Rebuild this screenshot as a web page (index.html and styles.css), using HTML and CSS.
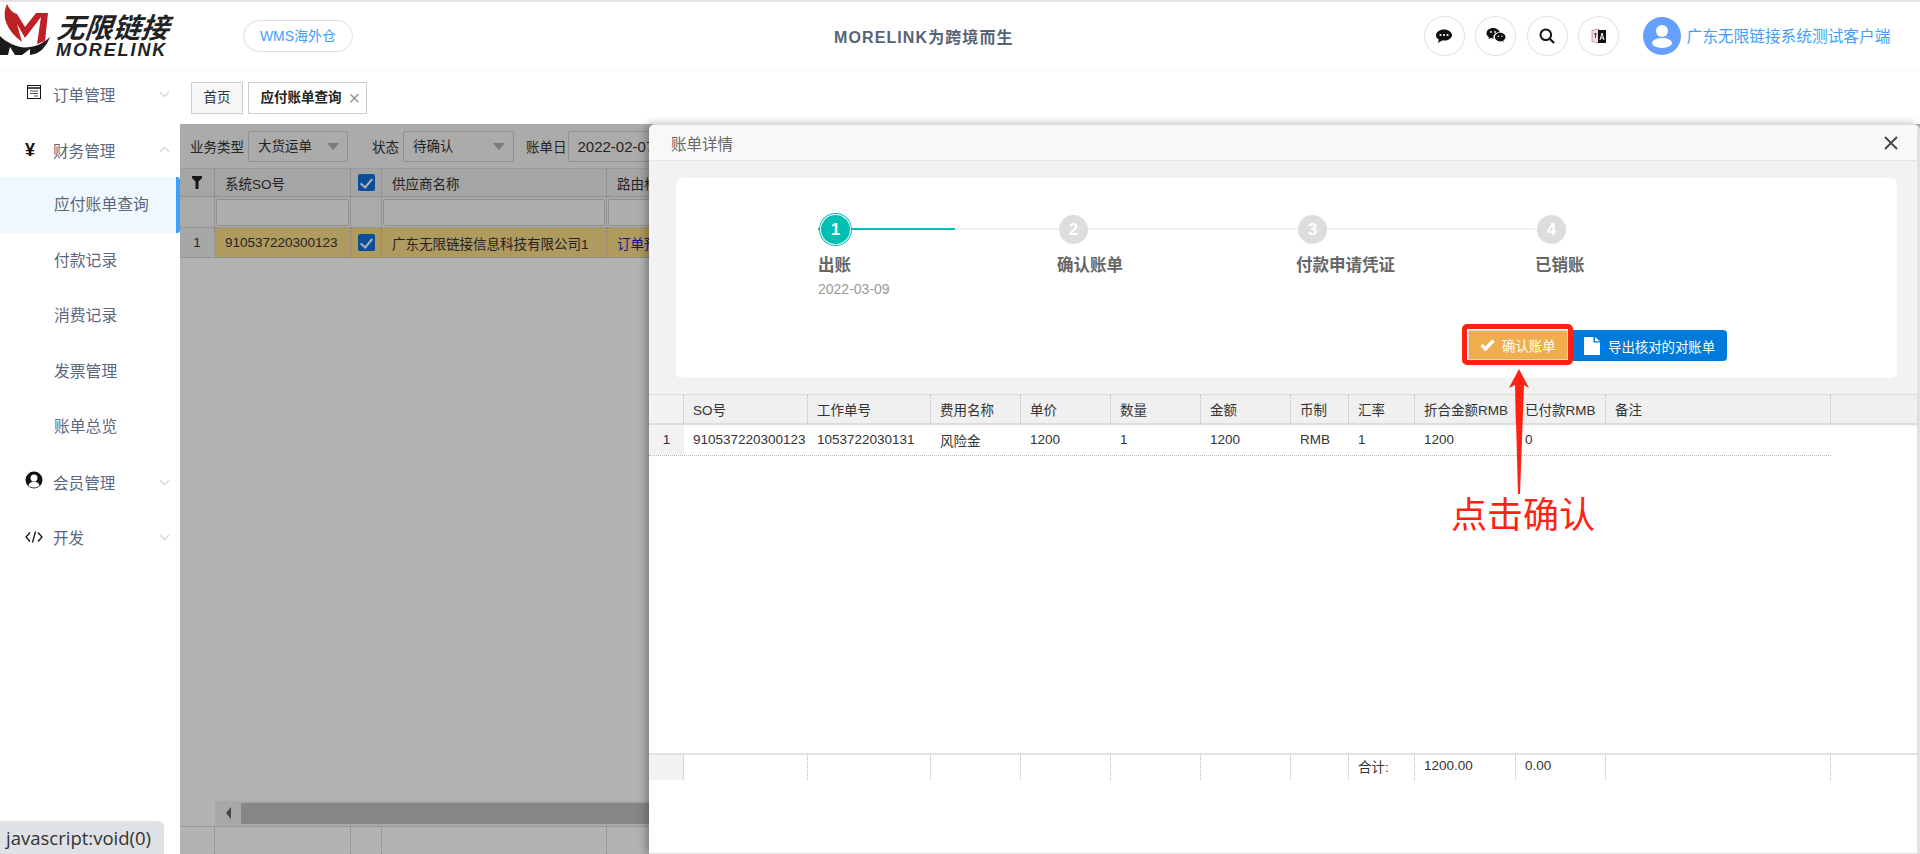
FILE: index.html
```html
<!DOCTYPE html>
<html lang="zh-CN">
<head>
    <meta charset="UTF-8">
    <title>应付账单查询</title>
    <link rel="stylesheet" href="styles.css">
</head>
<body>
    <header class="topbar">
        <div class="logo">
            <svg class="logo-mark" width="52" height="58" viewBox="0 0 52 58">
                <path d="M0 36C8 44 20 49 30 47C38 46 45 42 50 37C46 47 40 54 30 55L30 49L22 55L15 55L10 47L8 55L0 55Z" fill="#1a1a1a"/>
                <path d="M7 4C1 16 6 30 22 42L17 24L25 38L41 17L37 44L45 41L48 13L36 13L25 27L17 14C13 13 9 9 7 4Z" fill="#bd2026"/>
            </svg>
            <div class="logo-text">
                <span class="logo-cn">无限链接</span>
                <span class="logo-en">MORELINK</span>
            </div>
        </div>
        <a class="wms-btn">WMS海外仓</a>
        <div class="slogan">MORELINK为跨境而生</div>
        <div class="top-tools">
            <span class="tool-btn">
                <svg width="18" height="18" viewBox="0 0 18 18"><path d="M9 2.500C4.600 2.500 1 5 1 8.200c0 1.800 1.100 3.300 2.800 4.300L3 16l4-2.600c.6.1 1.300.2 2 .2 4.400 0 8-2.400 8-5.400S13.400 2.500 9 2.500z" fill="#111"/><circle cx="5.500" cy="8" r="1.100" fill="#fff"/><circle cx="9" cy="8" r="1.100" fill="#fff"/><circle cx="12.500" cy="8" r="1.100" fill="#fff"/></svg>
            </span>
            <span class="tool-btn">
                <svg width="20" height="18" viewBox="0 0 20 18"><path d="M7 1C3.400 1 .5 3.300.5 6.200c0 1.700 1 3.100 2.500 4.100L2.400 12.300l2.300-1.200c.7.200 1.400.3 2.300.3.200 0 .4 0 .6 0-.1-.4-.2-.8-.2-1.300C7.400 7.500 10 5.300 13.300 5.300h.4C13.100 2.800 10.300 1 7 1z" fill="#111"/><path d="M19.500 10.100c0-2.500-2.500-4.300-5.300-4.300-3 0-5.300 1.900-5.300 4.300s2.300 4.300 5.300 4.300c.6 0 1.200-.1 1.800-.3l1.700 1-.5-1.600c1.400-.8 2.300-2 2.300-3.400z" fill="#111"/><circle cx="5" cy="5" r=".9" fill="#fff"/><circle cx="9" cy="5" r=".9" fill="#fff"/><circle cx="12.400" cy="9.300" r=".7" fill="#fff"/><circle cx="16" cy="9.300" r=".7" fill="#fff"/></svg>
            </span>
            <span class="tool-btn">
                <svg width="18" height="18" viewBox="0 0 18 18"><circle cx="7.800" cy="7.800" r="5.300" fill="none" stroke="#111" stroke-width="2"/><path d="M11.800 11.800L16 16" stroke="#111" stroke-width="2.200"/></svg>
            </span>
            <span class="tool-btn">
                <svg width="16" height="18" viewBox="0 0 16 18"><path d="M1 3.500L8 2v14L1 14.500z" fill="#f3e3e3" stroke="#b58" stroke-width=".6"/><path d="M7 3h8v13H7z" fill="#111"/><path d="M9 13l2-7 2 7M10 11h2" stroke="#fff" stroke-width="1" fill="none"/><path d="M3 7h3M4.500 6v5" stroke="#444" stroke-width="1"/></svg>
            </span>
        </div>
        <div class="user">
            <span class="avatar">
                <svg width="38" height="38" viewBox="0 0 38 38"><circle cx="19" cy="14" r="6" fill="#fff"/><ellipse cx="19" cy="26" rx="10" ry="5" fill="#fff"/></svg>
            </span>
            <span class="user-name">广东无限链接系统测试客户端</span>
        </div>
    </header>

    <div class="layout">
        <aside class="sidebar">
            <div class="menu-item">
                <svg class="menu-icon" width="16" height="16" viewBox="0 0 16 16"><rect x="1.500" y="1.500" width="13" height="13" fill="none" stroke="#111" stroke-width="1"/><path d="M1.500 4h13" stroke="#111" stroke-width="1.500"/><path d="M4 7h8M4 9.500h8M8 12h4" stroke="#555" stroke-width="1"/></svg>
                <span class="menu-label">订单管理</span>
                <svg class="menu-arrow" width="11" height="7" viewBox="0 0 11 7"><path d="M1 1l4.500 4.500L10 1" fill="none" stroke="#d4d7dc" stroke-width="1.400"/></svg>
            </div>
            <div class="menu-item">
                <span class="menu-icon yen">¥</span>
                <span class="menu-label">财务管理</span>
                <svg class="menu-arrow" width="11" height="7" viewBox="0 0 11 7"><path d="M1 6l4.500-4.500L10 6" fill="none" stroke="#d4d7dc" stroke-width="1.400"/></svg>
            </div>
            <div class="sub-item active">应付账单查询</div>
            <div class="sub-item">付款记录</div>
            <div class="sub-item">消费记录</div>
            <div class="sub-item">发票管理</div>
            <div class="sub-item">账单总览</div>
            <div class="menu-item">
                <svg class="menu-icon" width="18" height="18" viewBox="0 0 18 18"><circle cx="9" cy="9" r="8.500" fill="#111"/><circle cx="9" cy="7" r="3.500" fill="#fff"/><path d="M3.500 14.500c1-3 3-4 5.500-4s4.500 1 5.500 4c-1.500 1.500-3.500 2-5.500 2s-4-.5-5.500-2z" fill="#fff"/></svg>
                <span class="menu-label">会员管理</span>
                <svg class="menu-arrow" width="11" height="7" viewBox="0 0 11 7"><path d="M1 1l4.500 4.500L10 1" fill="none" stroke="#d4d7dc" stroke-width="1.400"/></svg>
            </div>
            <div class="menu-item">
                <svg class="menu-icon icon-code" width="18" height="14" viewBox="0 0 18 14"><path d="M5 2.500L1 7l4 4.500M13 2.500L17 7l-4 4.500M10.500 1.500l-3 11" fill="none" stroke="#111" stroke-width="1.300"/></svg>
                <span class="menu-label">开发</span>
                <svg class="menu-arrow" width="11" height="7" viewBox="0 0 11 7"><path d="M1 1l4.500 4.500L10 1" fill="none" stroke="#d4d7dc" stroke-width="1.400"/></svg>
            </div>
        </aside>

        <main class="content">
            <div class="tabs">
                <span class="tab">首页</span>
                <span class="tab tab-current">应付账单查询<i class="tab-close">×</i></span>
            </div>

            <div class="panel">
                <div class="filters">
                    <label class="f-label">业务类型</label>
                    <span class="f-select f-type">大货运单<i class="caret"></i></span>
                    <label class="f-label f-gap">状态</label>
                    <span class="f-select f-state">待确认<i class="caret"></i></span>
                    <label class="f-label f-gap2">账单日</label>
                    <span class="f-select f-date">2022-02-07</span>
                </div>

                <div class="grid-row grid-head">
                    <div class="g-cell c-no">
                        <svg width="10" height="13" viewBox="0 0 10 13"><path d="M0 0h10v2L6.500 5.500V13h-3V5.500L0 2z" fill="#222"/></svg>
                    </div>
                    <div class="g-cell c-so">系统SO号</div>
                    <div class="g-cell c-ck"><span class="check"></span></div>
                    <div class="g-cell c-sup">供应商名称</div>
                    <div class="g-cell c-route">路由格式</div>
                </div>
                <div class="grid-row grid-search">
                    <div class="g-cell c-no"></div>
                    <div class="g-cell c-so"><span class="g-input"></span></div>
                    <div class="g-cell c-ck"></div>
                    <div class="g-cell c-sup"><span class="g-input"></span></div>
                    <div class="g-cell c-route"><span class="g-input"></span></div>
                </div>
                <div class="grid-row grid-data">
                    <div class="g-cell c-no">1</div>
                    <div class="g-cell c-so hl">910537220300123</div>
                    <div class="g-cell c-ck hl"><span class="check"></span></div>
                    <div class="g-cell c-sup hl">广东无限链接信息科技有限公司1</div>
                    <div class="g-cell c-route hl link">订单预付</div>
                </div>
                <div class="grid-empty"></div>
                <div class="g-scroll">
                    <span class="g-scroll-btn"><i></i></span>
                    <span class="g-scroll-thumb"></span>
                </div>
                <div class="grid-row grid-foot">
                    <div class="g-cell c-no"></div>
                    <div class="g-cell c-so"></div>
                    <div class="g-cell c-ck"></div>
                    <div class="g-cell c-sup"></div>
                    <div class="g-cell c-route"></div>
                </div>
            </div>
        </main>
    </div>

    <div class="mask"></div>

    <section class="modal">
        <div class="modal-title">
            <span>账单详情</span>
            <svg width="14" height="14" viewBox="0 0 14 14"><path d="M1 1l12 12M13 1L1 13" stroke="#444" stroke-width="1.800"/></svg>
        </div>
        <div class="modal-top">
            <div class="step-card">
                <div class="steps">
                    <div class="step step-done">
                        <div class="step-track"><span class="step-dot">1</span></div>
                        <div class="step-name">出账</div>
                        <div class="step-date">2022-03-09</div>
                    </div>
                    <div class="step">
                        <div class="step-track"><span class="step-dot">2</span></div>
                        <div class="step-name">确认账单</div>
                    </div>
                    <div class="step">
                        <div class="step-track"><span class="step-dot">3</span></div>
                        <div class="step-name">付款申请凭证</div>
                    </div>
                    <div class="step step-last">
                        <div class="step-track"><span class="step-dot">4</span></div>
                        <div class="step-name">已销账</div>
                    </div>
                </div>
                <div class="step-actions">
                    <a class="btn btn-confirm">
                        <svg width="15" height="12" viewBox="0 0 15 12"><path d="M1.500 6l4 4 8-8.500" fill="none" stroke="#fff" stroke-width="3.400"/></svg>
                        确认账单
                    </a>
                    <a class="btn btn-export">
                        <svg width="16" height="18" viewBox="0 0 16 18"><path d="M0 0h9.500v5.500H16V18H0zM11 0l5 4.200h-5z" fill="#fff"/></svg>
                        导出核对的对账单
                    </a>
                </div>
            </div>
        </div>

        <div class="bill-table">
            <div class="b-row b-head">
                <div class="b-cell b-no"></div>
                <div class="b-cell b-so">SO号</div>
                <div class="b-cell b-job">工作单号</div>
                <div class="b-cell b-fee">费用名称</div>
                <div class="b-cell b-price">单价</div>
                <div class="b-cell b-qty">数量</div>
                <div class="b-cell b-amt">金额</div>
                <div class="b-cell b-cur">币制</div>
                <div class="b-cell b-rate">汇率</div>
                <div class="b-cell b-rmb">折合金额RMB</div>
                <div class="b-cell b-paid">已付款RMB</div>
                <div class="b-cell b-note">备注</div>
            </div>
            <div class="b-row b-data">
                <div class="b-cell b-no">1</div>
                <div class="b-cell b-so">910537220300123</div>
                <div class="b-cell b-job">1053722030131</div>
                <div class="b-cell b-fee">风险金</div>
                <div class="b-cell b-price">1200</div>
                <div class="b-cell b-qty">1</div>
                <div class="b-cell b-amt">1200</div>
                <div class="b-cell b-cur">RMB</div>
                <div class="b-cell b-rate">1</div>
                <div class="b-cell b-rmb">1200</div>
                <div class="b-cell b-paid">0</div>
                <div class="b-cell b-note"></div>
            </div>
            <div class="b-space"></div>
            <div class="b-row b-foot">
                <div class="b-cell b-no"></div>
                <div class="b-cell b-so"></div>
                <div class="b-cell b-job"></div>
                <div class="b-cell b-fee"></div>
                <div class="b-cell b-price"></div>
                <div class="b-cell b-qty"></div>
                <div class="b-cell b-amt"></div>
                <div class="b-cell b-cur"></div>
                <div class="b-cell b-rate">合计:</div>
                <div class="b-cell b-rmb">1200.00</div>
                <div class="b-cell b-paid">0.00</div>
                <div class="b-cell b-note"></div>
            </div>
        </div>
    </section>

    <!-- red marks added on the screenshot -->
    <div class="mark-box"></div>
    <svg class="mark-arrow" width="24" height="126" viewBox="0 0 24 126"><path d="M10 0L20 19L15 16L11 125L9 125L6 16L0 19Z" fill="#ff2212"/></svg>
    <div class="mark-text">点击确认</div>

    <div class="status-link">javascript:void(0)</div>
</body>
</html>
```

FILE: styles.css
```css
* {
    box-sizing: border-box;
}

html, body {
    height: 100%;
}

body {
    margin: 0;
    overflow: hidden;
    position: relative;
    background: #fff;
    color: #333;
    font-family: "Liberation Sans", "Noto Sans CJK SC", sans-serif;
    font-size: 13.5px;
}

/* top bar */
.topbar {
    display: flex;
    align-items: center;
    height: 69px;
    border-top: 2px solid #e2e2e2;
    background: #fff;
    box-shadow: 0 1px 4px rgba(0, 0, 0, 0.05);
    position: relative;
    z-index: 1;
}

.logo {
    display: flex;
    align-items: flex-start;
    width: 243px;
    height: 100%;
    overflow: hidden;
}

.logo-mark {
    margin-top: -2px;
    flex: none;
}

.logo-text {
    display: flex;
    flex-direction: column;
    margin: 13px 0 0 4px;
    color: #222;
    font-style: italic;
}

.logo-cn {
    padding-left: 1px;
    font-size: 28px;
    font-weight: 700;
    line-height: 27px;
    transform: skewX(-6deg);
}

.logo-en {
    font-size: 18px;
    font-weight: 700;
    letter-spacing: 1.900px;
    line-height: 16px;
}

.wms-btn {
    width: 110px;
    height: 32px;
    line-height: 30px;
    border: 1px solid #dcdfe6;
    border-radius: 16px;
    text-align: center;
    color: #409eff;
    font-size: 14px;
}

.slogan {
    width: 180px;
    margin-left: 481px;
    color: #566478;
    font-size: 16px;
    font-weight: 700;
    letter-spacing: 1.100px;
    white-space: nowrap;
}

.top-tools {
    display: flex;
    gap: 10.500px;
    margin-left: 409.500px;
}

.tool-btn {
    display: flex;
    align-items: center;
    justify-content: center;
    width: 41px;
    height: 40px;
    border: 1px solid #e2e2e2;
    border-radius: 50%;
}

.user {
    display: flex;
    align-items: center;
    margin-left: 23.500px;
    gap: 6px;
}

.avatar {
    width: 38px;
    height: 38px;
    border-radius: 50%;
    background: #66a0ff;
}

.avatar svg {
    display: block;
}

.user-name {
    color: #409eff;
    font-size: 15.700px;
    white-space: nowrap;
}

/* page body */
.layout {
    display: flex;
    height: calc(100vh - 69px);
}

.sidebar {
    width: 180px;
    flex: none;
    margin-top: -2.400px;
    background: #fff;
}

.menu-item {
    display: flex;
    align-items: center;
    height: 55.400px;
    padding: 0 10px 0 25px;
    color: #5a6780;
    font-size: 15.600px;
}

.menu-icon {
    width: 18px;
    flex: none;
    margin-top: -4px;
}

.icon-code {
    margin-top: 0;
}

.yen {
    color: #111;
    font-size: 18px;
    font-weight: 700;
    margin-top: 2px;
}

.menu-label {
    flex: 1;
    margin-left: 10px;
}

.menu-arrow {
    flex: none;
}

.sub-item {
    height: 55.400px;
    line-height: 55.400px;
    padding-left: 54px;
    color: #5a6780;
    font-size: 15.800px;
    white-space: nowrap;
}

.sub-item.active {
    background: #f0f8ff;
    border-right: 4px solid #409eff;
    border-radius: 0 3px 3px 0;
}

.content {
    flex: 1;
    min-width: 0;
    display: flex;
    flex-direction: column;
}

.tabs {
    display: flex;
    gap: 5px;
    height: 55px;
    padding: 13px 0 0 11px;
    flex: none;
}

.tab {
    height: 32px;
    line-height: 30px;
    padding: 0 11.500px;
    border: 1px solid #ccc;
    background: #f7f7f7;
    color: #333;
    font-size: 13.500px;
}

.tab-current {
    width: 119px;
    padding-right: 0;
    background: #fff;
    color: #222;
    font-weight: 700;
    white-space: nowrap;
}

.tab-close {
    margin-left: 7px;
    color: #999;
    font-style: normal;
    font-weight: 400;
    font-size: 20px;
    vertical-align: -3px;
}

/* grid behind the dialog */
.panel {
    flex: 1;
    min-height: 0;
    display: flex;
    flex-direction: column;
    overflow: hidden;
    background: #fff;
}

.filters {
    display: flex;
    align-items: center;
    height: 44px;
    flex: none;
    padding-left: 10px;
    background: #f5f5f5;
    white-space: nowrap;
}

.f-label {
    margin-right: 4px;
}

.f-gap {
    margin-left: 24px;
    margin-right: 4px;
}

.f-gap2 {
    margin-left: 12px;
    margin-right: 1px;
}

.f-select {
    position: relative;
    height: 31px;
    line-height: 29px;
    padding-left: 9px;
    border: 1px solid #ccc;
    border-radius: 2px;
}

.f-type {
    width: 100px;
}

.f-state {
    width: 111px;
}

.f-date {
    width: 200px;
    font-size: 15px;
}

.caret {
    position: absolute;
    right: 8px;
    top: 11px;
    border: 6px solid transparent;
    border-top: 7px solid #b0b0b0;
}

.grid-row {
    display: flex;
    flex: none;
}

.g-cell {
    display: flex;
    align-items: center;
    padding-left: 10px;
    border-right: 1px dotted #bbb;
    border-bottom: 1px dotted #bbb;
    white-space: nowrap;
    overflow: hidden;
}

.c-no {
    width: 35px;
    padding-left: 0;
    justify-content: center;
    background: #efefef;
}

.c-so {
    width: 136px;
}

.c-ck {
    width: 31px;
    padding-left: 0;
    justify-content: center;
}

.c-sup {
    width: 225px;
}

.c-route {
    width: 200px;
}

.grid-head {
    height: 29px;
    background: #ececec;
    border-top: 1px solid #ddd;
}

.grid-head .g-cell {
    background: #ececec;
}

.grid-search {
    height: 31px;
    background: #f4f4f4;
}

.grid-search .g-cell {
    background: #f4f4f4;
    padding: 0 1px;
}

.g-input {
    display: block;
    width: 100%;
    height: 27px;
    border: 1px solid #ccc;
    border-radius: 2px;
    background: #fafafa;
}

.grid-data {
    height: 30px;
}

.hl {
    background: #fbdd89;
}

.link {
    color: #1a1acc;
}

.check {
    display: block;
    width: 17px;
    height: 17px;
    border-radius: 2px;
    background: #0f6fdc;
    position: relative;
}

.check::after {
    content: "";
    position: absolute;
    left: 5.500px;
    top: 2px;
    width: 5px;
    height: 10px;
    border: solid #fff;
    border-width: 0 2px 2px 0;
    transform: rotate(40deg);
}

.grid-empty {
    flex: 1;
}

.g-scroll {
    display: flex;
    height: 25px;
    flex: none;
    margin-left: 35px;
    padding-bottom: 2px;
    background: #f1f1f1;
}

.g-scroll-btn {
    display: flex;
    align-items: center;
    justify-content: center;
    width: 26px;
}

.g-scroll-btn i {
    border: 6px solid transparent;
    border-left: 0;
    border-right: 5px solid #666;
}

.g-scroll-thumb {
    flex: 1;
    margin: 2px 0 0;
    background: #c1c1c1;
}

.grid-foot {
    height: 28px;
    background: #fbfbfb;
    border-top: 1px solid #d8d8d8;
}

.grid-foot .g-cell {
    border-bottom: 0;
    background: #fff;
}

/* dialog */
.mask {
    position: absolute;
    left: 180px;
    top: 124px;
    right: 0;
    bottom: 0;
    background: rgba(0, 0, 0, 0.3);
}

.modal {
    position: absolute;
    left: 649px;
    top: 124px;
    right: 0;
    bottom: 0;
    display: flex;
    flex-direction: column;
    background: #fff;
    border-top: 1px solid #ddd;
    border-right: 3px solid #e2e2e2;
    border-bottom: 1px solid #e2e2e2;
    border-radius: 6px 6px 0 0;
    box-shadow: -3px 0 8px rgba(0, 0, 0, 0.3);
}

.modal-title {
    display: flex;
    align-items: center;
    justify-content: space-between;
    height: 36px;
    flex: none;
    padding: 0 19px 0 22px;
    background: #f8f8f8;
    border-bottom: 1px solid #e4e4e4;
    border-radius: 6px 6px 0 0;
    color: #666;
    font-size: 15.500px;
}

.modal-top {
    height: 233px;
    flex: none;
    padding: 17px 20px 16px 27px;
    background: #f2f2f2;
}

.step-card {
    display: flex;
    flex-direction: column;
    height: 200px;
    padding: 34px 0 0 142px;
    background: #fff;
    border-radius: 6px;
}

.steps {
    display: flex;
    height: 118px;
}

.step {
    width: 239px;
    flex: none;
}

.step-track {
    display: flex;
    align-items: center;
    height: 34px;
    padding-left: 2px;
    background: linear-gradient(#f1f1f1, #f1f1f1) left center / 100% 2px no-repeat;
}

.step-last .step-track {
    background: none;
}

.step-done .step-track {
    background: linear-gradient(#00bfb3, #00bfb3) left center / 137px 2px no-repeat,
        linear-gradient(#f1f1f1, #f1f1f1) left center / 100% 2px no-repeat;
}

.step-dot {
    width: 29px;
    height: 29px;
    line-height: 29px;
    border-radius: 50%;
    background: #ddd;
    color: #fff;
    text-align: center;
    font-size: 17px;
    font-weight: 700;
}

.step-done .step-dot {
    margin-left: 1px;
    background: #00bfb3;
    box-shadow: 0 0 0 1px #fff, 0 0 0 2px #00bfb3;
}

.step-name {
    margin-top: 8px;
    color: #666;
    font-size: 16.500px;
    font-weight: 700;
    line-height: 22px;
}

.step-date {
    margin-top: 4px;
    color: #999;
    font-size: 14px;
    line-height: 18px;
}

.step-actions {
    display: flex;
    align-items: flex-start;
    padding-left: 650px;
}

.btn {
    display: flex;
    align-items: center;
    height: 30px;
    color: #fff;
    font-size: 13.400px;
    white-space: nowrap;
}

.btn-confirm {
    width: 100px;
    gap: 7px;
    padding-left: 11px;
    background: #f0ad4e;
    border: 1px solid #ddd;
}

.btn-export {
    width: 154px;
    height: 31px;
    margin-left: 5px;
    gap: 8px;
    padding-left: 11px;
    background: #007bdb;
    border-radius: 0 4px 4px 0;
}

/* bill table */
.bill-table {
    flex: 1;
    min-height: 0;
    display: flex;
    flex-direction: column;
    background: #fff;
}

.b-row {
    display: flex;
    flex: none;
}

.b-cell {
    display: flex;
    align-items: center;
    padding: 0 0 1px 9px;
    border-right: 1px dotted #bbb;
    white-space: nowrap;
    overflow: hidden;
}

.b-no { width: 35px; padding-left: 0; justify-content: center; background: #f2f2f2; }
.b-so { width: 124px; }
.b-job { width: 123px; }
.b-fee { width: 90px; }
.b-price { width: 90px; }
.b-qty { width: 90px; }
.b-amt { width: 90px; }
.b-cur { width: 58px; }
.b-rate { width: 66px; }
.b-rmb { width: 101px; }
.b-paid { width: 90px; }
.b-note { width: 225px; }

.b-head {
    height: 31px;
    background: #f0f0f0;
    border-top: 1px solid #ddd;
    border-bottom: 2px solid #ddd;
    box-shadow: 0 2px 4px rgba(0, 0, 0, 0.04);
}

.b-data {
    height: 31px;
    width: 1182px;
    border-bottom: 1px dotted #bbb;
}

.b-data .b-cell {
    border-right: 0;
}

.b-space {
    flex: 1;
}

.b-foot {
    height: 27px;
    margin-bottom: 73px;
    border-top: 2px solid #e2e2e2;
}

.b-foot .b-cell {
    padding-bottom: 4px;
}

/* red marks */
.mark-box {
    position: absolute;
    left: 1462px;
    top: 324px;
    width: 111px;
    height: 41px;
    border: 5px solid #ff2212;
    border-radius: 5px;
}

.mark-arrow {
    position: absolute;
    left: 1509px;
    top: 369px;
}

.mark-text {
    position: absolute;
    left: 1451px;
    top: 491px;
    color: #ff2212;
    font-size: 36px;
    line-height: 50px;
    white-space: nowrap;
}

.status-link {
    position: absolute;
    left: 0;
    bottom: 0;
    width: 164px;
    height: 33px;
    padding-left: 6px;
    line-height: 33px;
    background: #dee1e6;
    border-radius: 0 6px 0 0;
    color: #333;
    font-family: "Open Sans", sans-serif;
    font-size: 18.500px;
    white-space: nowrap;
}
```
